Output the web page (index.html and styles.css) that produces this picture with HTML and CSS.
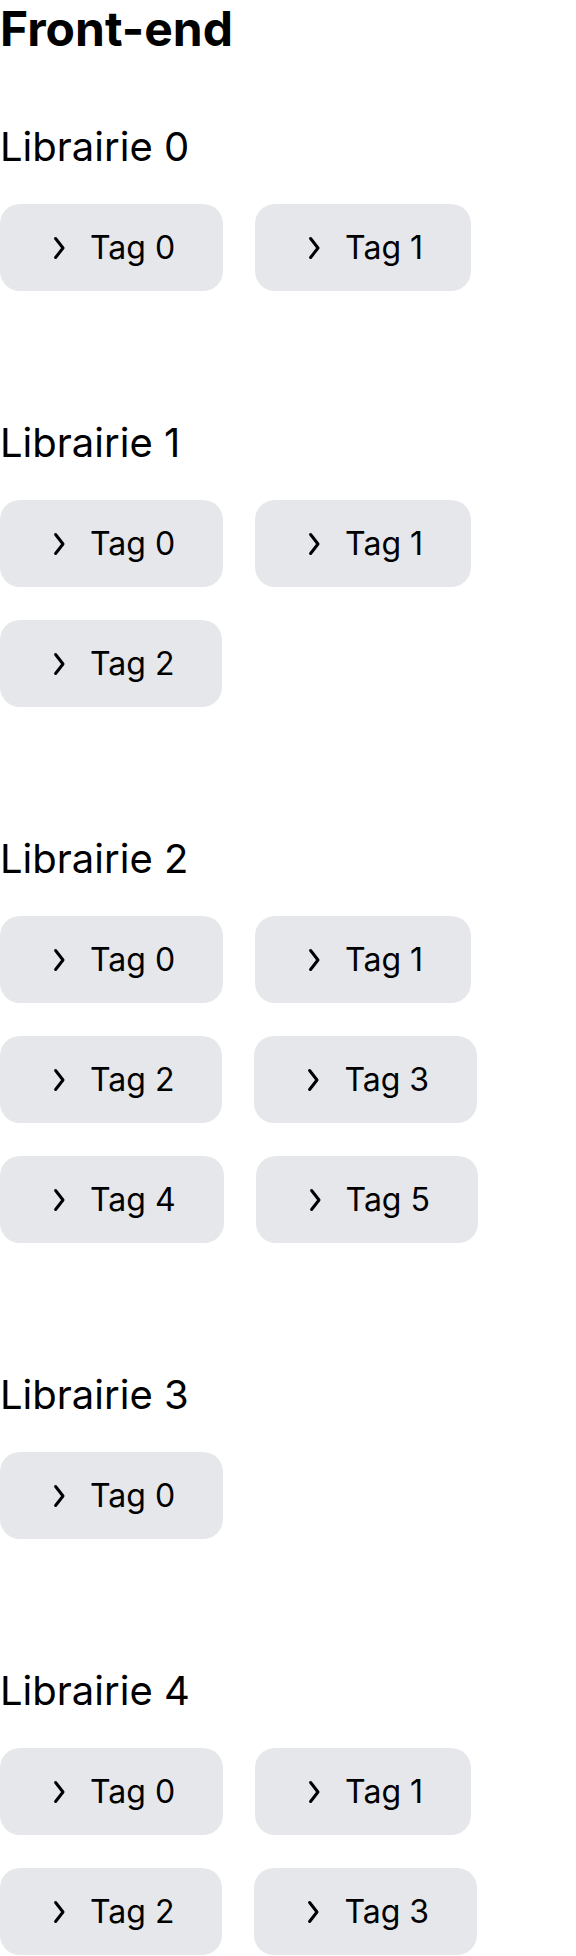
FILE: index.html
```html
<!DOCTYPE html>
<html lang="fr">
<head>
<meta charset="utf-8">
<title>Front-end</title>
<link rel="stylesheet" href="styles.css">
</head>
<body>
<main class="page">
  <h1 class="page-title">Front-end</h1>

  <section class="library">
    <h2 class="library-title">Librairie 0</h2>
    <div class="tags">
      <button class="tag"><svg class="chev" viewBox="0 0 12 24"><polyline points="2.6,2.5 10,12 2.6,21.5"/></svg><span>Tag 0</span></button>
      <button class="tag"><svg class="chev" viewBox="0 0 12 24"><polyline points="2.6,2.5 10,12 2.6,21.5"/></svg><span>Tag 1</span></button>
    </div>
  </section>

  <section class="library">
    <h2 class="library-title">Librairie 1</h2>
    <div class="tags">
      <button class="tag"><svg class="chev" viewBox="0 0 12 24"><polyline points="2.6,2.5 10,12 2.6,21.5"/></svg><span>Tag 0</span></button>
      <button class="tag"><svg class="chev" viewBox="0 0 12 24"><polyline points="2.6,2.5 10,12 2.6,21.5"/></svg><span>Tag 1</span></button>
      <button class="tag"><svg class="chev" viewBox="0 0 12 24"><polyline points="2.6,2.5 10,12 2.6,21.5"/></svg><span>Tag 2</span></button>
    </div>
  </section>

  <section class="library">
    <h2 class="library-title">Librairie 2</h2>
    <div class="tags">
      <button class="tag"><svg class="chev" viewBox="0 0 12 24"><polyline points="2.6,2.5 10,12 2.6,21.5"/></svg><span>Tag 0</span></button>
      <button class="tag"><svg class="chev" viewBox="0 0 12 24"><polyline points="2.6,2.5 10,12 2.6,21.5"/></svg><span>Tag 1</span></button>
      <button class="tag"><svg class="chev" viewBox="0 0 12 24"><polyline points="2.6,2.5 10,12 2.6,21.5"/></svg><span>Tag 2</span></button>
      <button class="tag"><svg class="chev" viewBox="0 0 12 24"><polyline points="2.6,2.5 10,12 2.6,21.5"/></svg><span>Tag 3</span></button>
      <button class="tag"><svg class="chev" viewBox="0 0 12 24"><polyline points="2.6,2.5 10,12 2.6,21.5"/></svg><span>Tag 4</span></button>
      <button class="tag"><svg class="chev" viewBox="0 0 12 24"><polyline points="2.6,2.5 10,12 2.6,21.5"/></svg><span>Tag 5</span></button>
    </div>
  </section>

  <section class="library">
    <h2 class="library-title">Librairie 3</h2>
    <div class="tags">
      <button class="tag"><svg class="chev" viewBox="0 0 12 24"><polyline points="2.6,2.5 10,12 2.6,21.5"/></svg><span>Tag 0</span></button>
    </div>
  </section>

  <section class="library">
    <h2 class="library-title">Librairie 4</h2>
    <div class="tags">
      <button class="tag"><svg class="chev" viewBox="0 0 12 24"><polyline points="2.6,2.5 10,12 2.6,21.5"/></svg><span>Tag 0</span></button>
      <button class="tag"><svg class="chev" viewBox="0 0 12 24"><polyline points="2.6,2.5 10,12 2.6,21.5"/></svg><span>Tag 1</span></button>
      <button class="tag"><svg class="chev" viewBox="0 0 12 24"><polyline points="2.6,2.5 10,12 2.6,21.5"/></svg><span>Tag 2</span></button>
      <button class="tag"><svg class="chev" viewBox="0 0 12 24"><polyline points="2.6,2.5 10,12 2.6,21.5"/></svg><span>Tag 3</span></button>
    </div>
  </section>
</main>
</body>
</html>
```

FILE: styles.css
```css
html, body {
  margin: 0;
  padding: 0;
  background: #ffffff;
}

body {
  font-family: Inter, "Noto Sans", sans-serif;
  color: #000000;
}

.page {
  display: flex;
  flex-direction: column;
}

.page-title {
  margin: 0;
  font-family: Inter, "Noto Sans", sans-serif;
  font-weight: 700;
  font-size: 48px;
  line-height: 58px;
}

.library {
  margin-top: 128px;
}

.page-title + .library {
  margin-top: 65px;
}

.library-title {
  margin: 0 0 33px 0;
  font-weight: 400;
  font-size: 40px;
  line-height: 48px;
}

.tags {
  display: flex;
  flex-wrap: wrap;
  gap: 33px 32px;
}

.tag {
  display: flex;
  align-items: center;
  gap: 25px;
  margin: 0;
  padding: 24px 48px 24px 53px;
  border: none;
  border-radius: 20px;
  background: #e5e7eb;
  color: #000000;
  font-family: Inter, "Noto Sans", sans-serif;
  font-size: 32px;
  line-height: 39px;
  cursor: pointer;
}

.chev {
  width: 12px;
  height: 24px;
  flex: none;
  fill: none;
  stroke: currentColor;
  stroke-width: 3;
  stroke-linecap: round;
  stroke-linejoin: round;
}
```
